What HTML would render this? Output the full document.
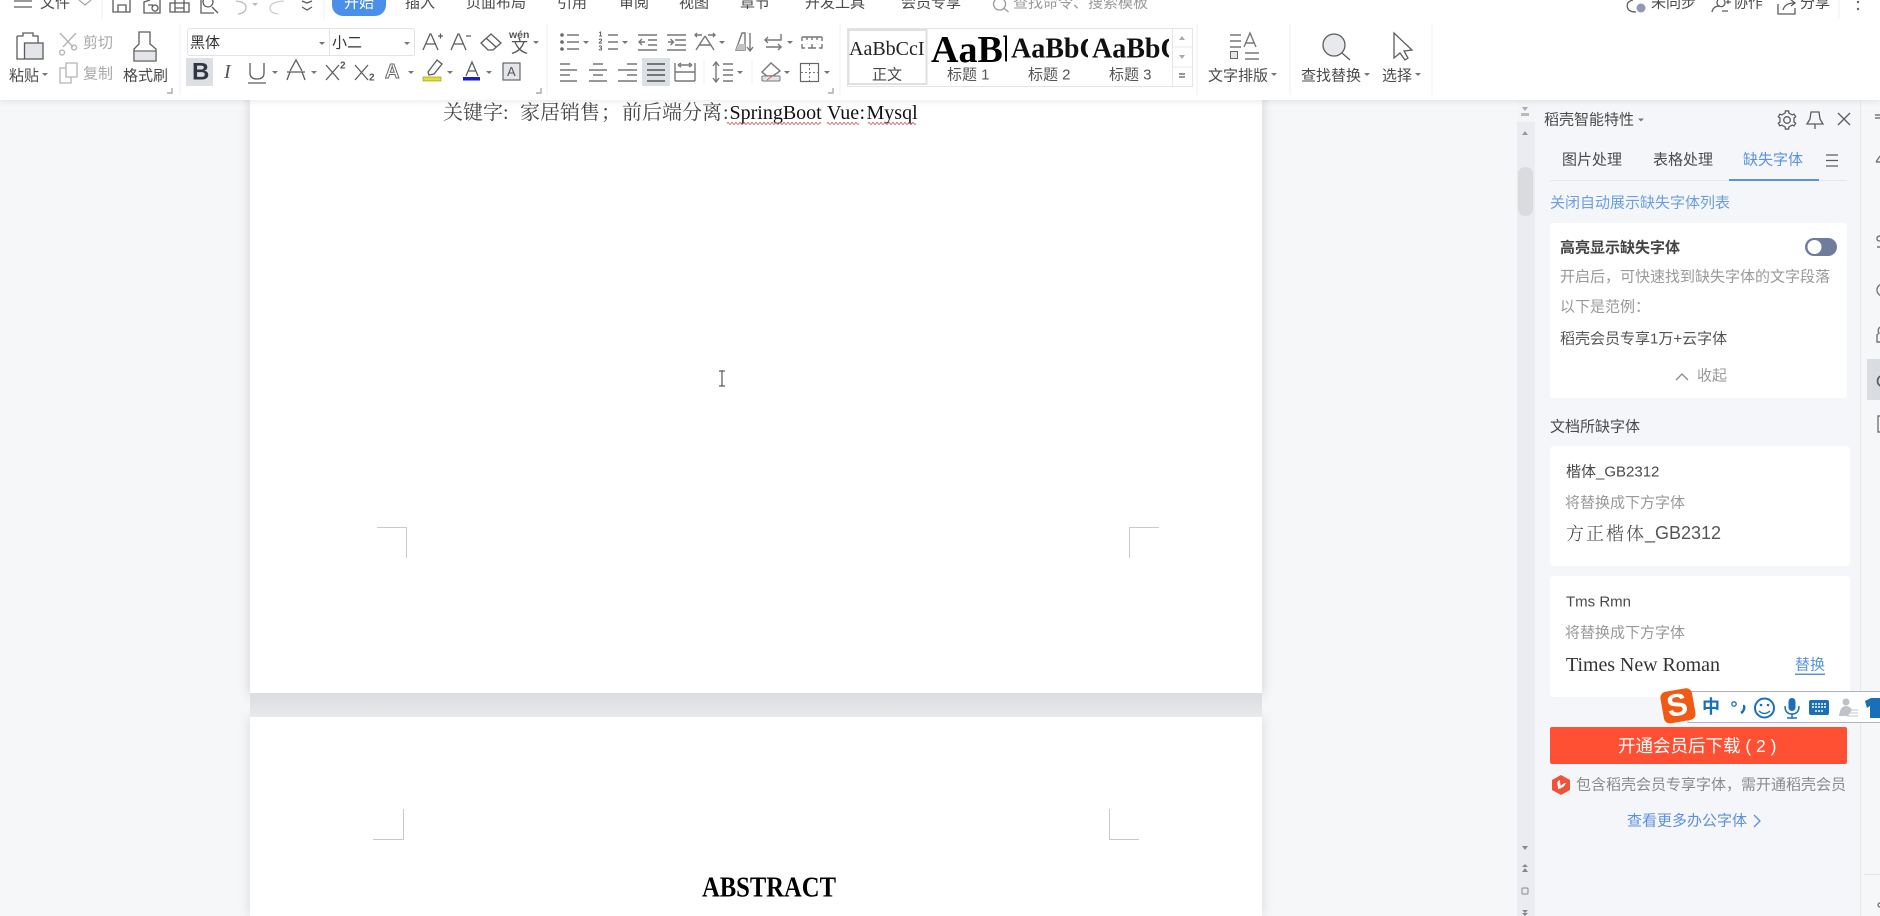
<!DOCTYPE html>
<html lang="zh"><head><meta charset="utf-8"><title>WPS</title>
<style>
html,body{margin:0;padding:0;width:1880px;height:916px;overflow:hidden;background:#f6f7f9}
div{position:absolute}
svg{position:absolute;left:0;top:0;display:block}
text{font-family:"Liberation Sans","Noto Sans CJK SC",sans-serif;font-size:15px;fill:#4a4a4a;dominant-baseline:central}
.g{fill:#a8a8a8}.m{fill:#999}.b{fill:#5a93dc}.d{fill:#555}
.s{font-family:"Liberation Serif","Noto Serif CJK SC",serif;fill:#222}
.k{font-family:"Liberation Serif","Noto Serif CJK SC",serif;font-size:20px;fill:#444}
.i{fill:none;stroke:#5c5c5c;stroke-width:1.3}
.l{fill:none;stroke:#777;stroke-width:1.4}
.c{fill:#777;stroke:none}
.h{fill:none;stroke:#c9c9c9;stroke-width:1}
.sep{stroke:#eeeff1;stroke-width:1}
</style></head><body>
<div style="left:250px;top:90px;width:1012px;height:603px;background:#fff;box-shadow:0 3px 12px rgba(0,0,0,.15)"></div>
<div style="left:250px;top:717px;width:1012px;height:199px;background:#fff;box-shadow:0 0 12px rgba(0,0,0,.13)"></div>
<div style="left:250px;top:693px;width:1012px;height:24px;background:linear-gradient(#dadcdf,#e8e9eb)"></div>
<div style="left:1517px;top:100px;width:18px;height:816px;background:#eaecf1"></div>
<div style="left:1517px;top:100px;width:18px;height:22px;background:#f4f5f8"></div>
<div style="left:1518px;top:167px;width:15px;height:49px;background:#d9dbdf;border-radius:7px"></div>
<div style="left:1535px;top:100px;width:325px;height:816px;background:#f4f6f9"></div>
<div style="left:1860px;top:100px;width:20px;height:816px;background:#f6f7f9;border-left:1px solid #e6e8ec;box-sizing:border-box"></div>
<div style="left:1867px;top:359px;width:13px;height:41px;background:#d9dce1"></div>
<div style="left:0;top:0;width:1880px;height:100px;background:#fff;box-shadow:0 2px 5px rgba(0,0,0,.08)"></div>
<div style="left:1550px;top:223px;width:297px;height:175px;background:#fff;border-radius:3px"></div>
<div style="left:1550px;top:446px;width:300px;height:120px;background:#fff;border-radius:4px"></div>
<div style="left:1550px;top:576px;width:300px;height:121px;background:#fff;border-radius:4px"></div>
<div style="left:1550px;top:727px;width:297px;height:37px;background:#ff5033;border-radius:2px"></div>

<svg width="1880" height="916" viewBox="0 0 1880 916" xmlns="http://www.w3.org/2000/svg">
<defs>
<clipPath id="c0"><rect x="849" y="30" width="77" height="40"/></clipPath>
<clipPath id="c1"><rect x="930" y="30" width="77" height="40"/></clipPath>
<clipPath id="c2"><rect x="1010" y="30" width="78" height="40"/></clipPath>
<clipPath id="c3"><rect x="1091" y="30" width="78" height="40"/></clipPath>
</defs>
<!-- top tabs -->
<path class="i" d="M14 1H32M14 7H32"/>
<text x="40" y="3">文件</text>
<path class="i" style="stroke:#aaa" d="M79 0L85 5L91 0"/>
<path class="sep" d="M102 0V19"/>
<path class="i" d="M113 0V12H130V0M118 12V5H126V12"/>
<path class="i" d="M150 0L144 2V13H160V0M148 5H153M152 8a3 3 0 1 1 0 .1"/>
<path class="i" d="M170 3H189V12H170ZM175 12V0M184 12V0M175 8H184"/>
<path class="i" d="M201 0V13H214M204 -1a5 5 0 1 0 8 0M212 7L218 13"/>
<path class="i" style="stroke:#bbb" d="M236 1Q246 2 246 7Q246 13 238 14"/>
<path class="c" d="M252 3H258L255 6Z" style="fill:#bbb"/>
<path class="i" style="stroke:#ccc" d="M284 1Q270 2 270 8Q270 13 278 14"/>
<path class="i" d="M302 1L307 3L312 1M302 7L307 10L312 7"/>
<path class="sep" d="M324 0V19"/>
<rect x="332" y="-10" width="54" height="26" rx="11" fill="#4a90e8"/>
<text x="344" y="3" style="fill:#fff">开始</text>
<text x="405" y="3">插入</text>
<text x="466" y="3">页面布局</text>
<text x="557" y="3">引用</text>
<text x="619" y="3">审阅</text>
<text x="679" y="3">视图</text>
<text x="740" y="3">章节</text>
<text x="805" y="3">开发工具</text>
<text x="901" y="3">会员专享</text>
<path class="i" style="stroke:#999" d="M1000 0a6 6 0 1 0 .1 0M1004 10L1009 14" transform="translate(-.5,-2)"/>
<text x="1013" y="3" class="m">查找命令、搜索模板</text>
<path class="i" d="M1633 0Q1625 2 1628 9Q1630 12 1636 12"/>
<circle cx="1641" cy="8" r="4.5" fill="#8f9bb0"/>
<text x="1651" y="3">未同步</text>
<path class="i" d="M1712 12Q1713 6 1720 6M1724 0a4 4 0 1 1 -6 0M1726 2H1731M1728 0V4M1722 11H1728"/>
<text x="1733" y="3">协作</text>
<path class="i" d="M1778 4V14H1795V8M1783 10Q1785 3 1794 3M1790 -1L1795 3L1791 6"/>
<text x="1800" y="3">分享</text>
<path class="sep" d="M1839 0V19"/>
<circle cx="1858" cy="2" r="1.2" fill="#666"/><circle cx="1858" cy="9" r="1.2" fill="#666"/>

<!-- clipboard -->
<path class="i" d="M17 36H23V33H33V36H38V43M17 36V59H24"/>
<rect x="24.500" y="43" width="18.500" height="16" fill="#e3e5ea" stroke="#5c5c5c" stroke-width="1.3"/>
<text x="9" y="76">粘贴</text><path class="c" d="M42 73H48L45 76Z"/>
<path class="i" style="stroke:#b4b4b4" d="M60 33L73 47M76 33L63 47M62 50a2.5 2.5 0 1 0 .1 0M74 45a2.5 2.5 0 1 0 .1 0"/>
<text x="83" y="43" class="g">剪切</text>
<path class="i" style="stroke:#b4b4b4" d="M66 63H77V77H66ZM66 68H60V83H71V77"/>
<text x="83" y="74" class="g">复制</text>
<path class="i" d="M139 32H150V44L156 49V61H134V49L139 44Z"/>
<rect x="134" y="51" width="22" height="10" fill="#e3e5ea" stroke="#5c5c5c" stroke-width="1.1"/>
<text x="123" y="76">格式刷</text>
<path class="l" style="stroke:#aaa" d="M167 93H172V88"/>
<path class="sep" d="M180 24V95"/>

<!-- font -->
<rect x="187.500" y="28.500" width="227" height="27" rx="2" fill="#fff" stroke="#e2e3e6"/>
<path d="M329.500 29V55" stroke="#e2e3e6"/>
<text x="190" y="43" style="fill:#333">黑体</text><path class="c" d="M319 42H325L322 45Z"/>
<text x="332" y="43" style="fill:#333">小二</text><path class="c" d="M404 42H410L407 45Z"/>
<path class="i" d="M423 50L430 34H431L438 50M426 44H435M438 36H443M440.500 33.500V38.500"/>
<path class="i" d="M451 50L458 34H459L466 50M454 44H463M466 36H471"/>
<path class="i" d="M481 43L491 34L501 43L493 50H488ZM486 38L496 47"/>
<text x="509" y="35" style="font-size:10.500px;font-weight:700;fill:#555">wén</text>
<text x="511" y="47" style="font-size:17px;fill:#555">文</text>
<path class="c" d="M533 41H539L536 44Z"/>
<path class="sep" d="M547 24V95"/>
<rect x="186" y="58" width="27" height="28" fill="#dcdfe3"/>
<text x="192" y="72" style="font-size:24px;font-weight:700;fill:#2f3742">B</text>
<text x="224" y="72" style="font-size:20px;font-style:italic;font-family:'Liberation Serif',serif;fill:#555">I</text>
<path class="i" d="M250 63V73Q250 79 257 79Q264 79 264 73V63M248 83H266"/>
<path class="c" d="M272 71H278L275 74Z"/>
<path class="i" d="M290 71L296 60L302 71M287 72H305M290 72L287 80M302 72L305 80"/>
<path class="c" d="M311 71H317L314 74Z"/>
<path class="i" d="M326 65L339 80M339 65L326 80M355 65L368 80M368 65L355 80"/>
<text x="340" y="66" style="font-size:10px;font-weight:700;fill:#555">2</text>
<text x="369" y="78" style="font-size:10px;font-weight:700;fill:#555">2</text>
<text x="385" y="72" style="font-size:20px;font-weight:700;fill:#fff;stroke:#666;stroke-width:1">A</text>
<path class="c" d="M408 71H414L411 74Z"/>
<path class="i" d="M428 72L437 60L442 64L434 74L429 75Z"/>
<rect x="423" y="77" width="18" height="4" fill="#e4de2e" stroke="#8f8c20" stroke-width=".6"/>
<path class="c" d="M447 71H453L450 74Z"/>
<path class="i" d="M466 76L472 62L478 76M468 71H476"/>
<rect x="463" y="77" width="17" height="3.500" fill="#1b1bc8"/>
<path class="c" d="M486 71H492L489 74Z"/>
<rect x="503" y="63" width="17" height="17" fill="#e3e5ea" stroke="#666" stroke-width="1.2"/>
<text x="507" y="71.500" style="font-size:13px;fill:#555">A</text>
<path class="l" style="stroke:#aaa" d="M536 93H541V88"/>

<!-- paragraph row 1 -->
<circle cx="562" cy="35" r="1.800" fill="#666"/><circle cx="562" cy="42" r="1.800" fill="#666"/><circle cx="562" cy="49" r="1.800" fill="#666"/>
<path class="l" d="M567 35H579M567 42H579M567 49H579"/><path class="c" d="M583 41H589L586 44Z"/>
<text x="598.500" y="35" style="font-size:7px;font-weight:700;fill:#555">1</text><text x="598.500" y="42" style="font-size:7px;font-weight:700;fill:#555">2</text><text x="598.500" y="49" style="font-size:7px;font-weight:700;fill:#555">3</text>
<path class="l" d="M608 35H618M608 42H618M608 49H618"/><path class="c" d="M622 41H628L625 44Z"/>
<path class="l" d="M638 35H657M648 40H657M648 45H657M638 50H657M645 42H639M642 39L639 42L642 45"/>
<path class="l" d="M667 35H686M675 40H686M675 45H686M667 50H686M668 42H673M670.500 39L673.500 42L670.500 45"/>
<path class="l" d="M695 35H702M697 33L695 35L697 37M708 35H715M713 33L715 35L713 37M705 36L696 50M705 36L714 50M699 45H711"/>
<path class="c" d="M719 41H725L722 44Z"/>
<path class="l" d="M736 50L742 33H745V50Z"/><path d="M738 44H745V50H736Z" fill="#bfc2c7"/>
<path class="l" d="M750 33V50M747 47L750 51L753 47"/>
<path class="l" d="M781 34V40H765M768 37L765 40L768 43M766 47H781M778 44L781 47L778 50"/>
<path class="c" d="M787 41H793L790 44Z"/>
<path class="l" d="M802 37H822M802 37V41M807 37V40M812 37V40M817 37V40M822 37V41M802 44V48H805M812 44V48M808 48H816M819 48H822V44"/>
<!-- paragraph row 2 -->
<path class="l" d="M560 64H570M560 70H577M560 75H570M560 81H577"/>
<path class="l" d="M593 64H603M589 70H607M593 75H603M589 81H607"/>
<path class="l" d="M627 64H637M618 70H637M627 75H637M618 81H637"/>
<rect x="642" y="58" width="28" height="28" fill="#dcdfe3"/>
<path d="M647 64H665M647 70H665M647 75H665M647 81H665" stroke="#555" stroke-width="1.500"/>
<path class="l" d="M675 63V81M695 63V81M675 72H695M675 81H695M680 65H690M678 65L681 63M678 65L681 67M692 65L689 63M692 65L689 67"/>
<path class="sep" d="M704 60V84"/>
<path class="l" d="M716 63V81M713 66L716 62L719 66M713 78L716 82L719 78M723 64H733M723 70H733M723 75H733M723 81H733"/>
<path class="c" d="M737 71H743L740 74Z"/>
<path class="sep" d="M752 60V84"/>
<path class="l" d="M762 72L771 63L780 71L773 76H767Z"/><rect x="762" y="76" width="18" height="5" rx="1" fill="#e3e5ea" stroke="#777"/>
<path d="M767 80L775 74" stroke="#d9635a"/>
<path class="c" d="M784 71H790L787 74Z"/>
<rect x="800.500" y="63.500" width="18" height="18" fill="none" stroke="#666" stroke-width="1.200"/>
<path d="M809.500 64V81M801 72.500H818" stroke="#777" stroke-dasharray="2 2"/>
<path class="c" d="M824 71H830L827 74Z"/>
<path class="l" style="stroke:#aaa" d="M828 93H833V88"/>
<path class="sep" d="M840 24V95"/>

<!-- styles -->
<rect x="847.500" y="28.500" width="345" height="58" fill="#fff" stroke="#e3e4e7"/>
<rect x="848.500" y="30" width="78" height="54" fill="#fff" stroke="#dfe0e3" stroke-width="2"/>
<g clip-path="url(#c0)"><text x="849" y="49" class="s" style="font-size:20px">AaBbCcI</text></g>
<g clip-path="url(#c1)"><text x="931" y="50" class="s" style="font-size:38px;font-weight:700;fill:#000">AaBb</text></g>
<g clip-path="url(#c2)"><text x="1011" y="49" class="s" style="font-size:28px;font-weight:700;fill:#111">AaBbC</text></g>
<g clip-path="url(#c3)"><text x="1092" y="49" class="s" style="font-size:28px;font-weight:700;fill:#111">AaBbC</text></g>
<text x="872" y="75">正文</text>
<text x="947" y="75" class="d">标题 1</text>
<text x="1028" y="75" class="d">标题 2</text>
<text x="1109" y="75" class="d">标题 3</text>
<path d="M1172.500 29V86M1173 47H1192M1173 67H1192" stroke="#e6e7ea"/>
<path class="c" d="M1179 40L1182 36L1185 40Z" style="fill:#aaa"/><path class="c" d="M1179 55L1182 59L1185 55Z" style="fill:#aaa"/>
<path class="l" d="M1179 74H1185M1179 77H1185"/>
<path class="sep" d="M1197 24V95"/>
<path class="l" d="M1230 35H1241M1230 41H1241M1230 47H1241M1244 47L1250 33L1256 47M1246 43H1254M1245 53H1259M1245 59H1259"/>
<rect x="1230.500" y="51.500" width="7" height="7" fill="#e3e5ea" stroke="#666"/>
<text x="1208" y="76">文字排版</text><path class="c" d="M1271 73H1277L1274 76Z"/>
<path class="sep" d="M1290 24V95"/>
<circle cx="1334" cy="45" r="11" fill="#e8e9ec" stroke="#5c5c5c" stroke-width="1.300"/><path class="i" d="M1342 53L1350 60"/>
<text x="1301" y="76">查找替换</text><path class="c" d="M1364 73H1370L1367 76Z"/>
<path class="i" d="M1394 33V58L1400 53L1405 60L1408 58L1404 51L1412 50Z"/>
<text x="1382" y="76">选择</text><path class="c" d="M1415 73H1421L1418 76Z"/>
<path class="sep" d="M1432 24V95"/>

<!-- doc -->
<text x="443" y="113" class="k">关键字</text><text x="503" y="113" class="k">:</text>
<text x="520" y="113" class="k">家居销售</text><text x="601" y="113" class="k">；</text>
<text x="622" y="113" class="k">前后端分离</text><text x="723" y="113" class="k">:</text>
<text x="729.500" y="113" class="k" style="fill:#111">SpringBoot</text>
<text x="827" y="113" class="k" style="fill:#111">Vue</text><text x="859.500" y="113" class="k" style="fill:#111">:</text>
<text x="866.500" y="113" class="k" style="fill:#111">Mysql</text>
<path d="M727 123.500q1-2 2 0t2 0t2 0t2 0t2 0t2 0t2 0t2 0t2 0t2 0t2 0t2 0t2 0t2 0t2 0t2 0t2 0t2 0t2 0t2 0t2 0t2 0t2 0t2 0t2 0t2 0t2 0t2 0t2 0t2 0t2 0t2 0t2 0t2 0t2 0t2 0t2 0t2 0t2 0t2 0t2 0t2 0t2 0t2 0t2 0t2 0t2 0M827 123.500q1-2 2 0t2 0t2 0t2 0t2 0t2 0t2 0t2 0t2 0t2 0t2 0t2 0t2 0t2 0t2 0t2 0M868 123.500q1-2 2 0t2 0t2 0t2 0t2 0t2 0t2 0t2 0t2 0t2 0t2 0t2 0t2 0t2 0t2 0t2 0t2 0t2 0t2 0t2 0t2 0t2 0t2 0t2 0" fill="none" stroke="#c9454a" stroke-width=".8"/>
<path d="M719 371H725M719 386H725M722 371V386" stroke="#333" stroke-width="1" fill="none"/>
<path class="h" d="M377 527.500H406.500V558M1159 527.500H1129.500V558M403.500 809V839.500H373M1109.500 809V839.500H1139"/>
<text x="702" y="887.500" style="font-family:'Liberation Serif',serif;font-size:29px;font-weight:700;fill:#000" textLength="134" lengthAdjust="spacingAndGlyphs">ABSTRACT</text>

<!-- scrollbar icons -->
<path class="c" d="M1522 107H1528L1525 111Z" style="fill:#aaa"/><path class="c" d="M1521 113H1529V116H1521Z" style="fill:#bbb"/>
<path class="c" d="M1522 135L1525 131L1528 135Z" style="fill:#999"/>
<path class="c" d="M1522 846H1528L1525 850Z" style="fill:#888"/>
<path class="c" d="M1522 867L1525 864L1528 867ZM1522 872L1525 868H1525L1528 872Z" style="fill:#888"/>
<rect x="1522" y="888" width="6" height="6" rx="1" fill="none" stroke="#888"/>
<path class="c" d="M1522 910H1528L1525 913ZM1522 913H1528L1525 916Z" style="fill:#888"/>

<!-- panel -->
<text x="1544" y="120">稻壳智能特性</text><path class="c" d="M1638 118.500H1644L1641 121.500Z"/>
<g transform="translate(1787 120)" class="i">
<path id="gt" d="M-3.500 -6.060L-1.770 -7.080L-1.600 -9.060L1.600 -9.060L1.770 -7.080L3.500 -6.060"/>
<path transform="rotate(60)" d="M-3.500 -6.060L-1.770 -7.080L-1.600 -9.060L1.600 -9.060L1.770 -7.080L3.500 -6.060"/>
<path transform="rotate(120)" d="M-3.500 -6.060L-1.770 -7.080L-1.600 -9.060L1.600 -9.060L1.770 -7.080L3.500 -6.060"/>
<path transform="rotate(180)" d="M-3.500 -6.060L-1.770 -7.080L-1.600 -9.060L1.600 -9.060L1.770 -7.080L3.500 -6.060"/>
<path transform="rotate(240)" d="M-3.500 -6.060L-1.770 -7.080L-1.600 -9.060L1.600 -9.060L1.770 -7.080L3.500 -6.060"/>
<path transform="rotate(300)" d="M-3.500 -6.060L-1.770 -7.080L-1.600 -9.060L1.600 -9.060L1.770 -7.080L3.500 -6.060"/>
<circle r="3.300"/>
</g>
<path class="i" d="M1811 112H1819L1820 119L1823 124H1807L1810 119ZM1815 124V129"/>
<path class="i" d="M1838 113L1850 125M1850 113L1838 125"/>
<text x="1562" y="160">图片处理</text>
<text x="1653" y="160">表格处理</text>
<text x="1743" y="160" class="b">缺失字体</text>
<path class="i" d="M1826 155H1838M1826 160.500H1838M1826 166H1838"/>
<path d="M1550 180.500H1847" stroke="#e5e7eb"/>
<rect x="1729" y="179" width="90" height="2" fill="#5a93dc"/>
<text x="1550" y="203" class="b" style="fill:#6a9fe2">关闭自动展示缺失字体列表</text>

<text x="1560" y="248" style="font-weight:700;fill:#444">高亮显示缺失字体</text>
<rect x="1805" y="238" width="32" height="18" rx="9" fill="#6f7c9b"/><circle cx="1814.500" cy="247" r="7" fill="#fff"/>
<text x="1560" y="277" class="m">开启后，可快速找到缺失字体的文字段落</text>
<text x="1560" y="307" class="m">以下是范例：</text>
<text x="1560" y="339" class="d">稻壳会员专享1万+云字体</text>
<path class="i" style="stroke:#888" d="M1676 380L1682 374L1688 380"/>
<text x="1697" y="376" class="m">收起</text>

<text x="1550" y="427">文档所缺字体</text>
<text x="1566" y="472">楷体_GB2312</text>
<text x="1565" y="503" class="m">将替换成下方字体</text>
<text x="1566" y="533" style="font-family:'Noto Serif CJK SC',serif;font-size:18px;font-weight:300;fill:#444;letter-spacing:2px">方正楷体</text>
<text x="1645" y="533" style="font-size:18px;fill:#555" textLength="76">_GB2312</text>
<text x="1566" y="602">Tms Rmn</text>
<text x="1565" y="633" class="m">将替换成下方字体</text>
<text x="1566" y="665" class="s" style="font-size:20px;fill:#333" textLength="154">Times New Roman</text>
<text x="1795" y="665" class="b" style="text-decoration:underline">替换</text>

<text x="1618" y="746" style="font-size:17.500px;fill:#fff">开通会员后下载 ( 2 )</text>
<path d="M1561 775L1570 780V790L1561 795L1552 790V780Z" fill="#f0523a"/>
<path d="M1558 787Q1556 781 1560 780Q1560 784 1561 786Q1563 783 1566 783Q1564 788 1558 789Z" fill="#fff"/>
<text x="1576" y="785" class="m" style="fill:#8a8a8a">包含稻壳会员专享字体，需开通稻壳会员</text>
<text x="1627" y="821" class="b" style="fill:#5b8fe0">查看更多办公字体</text>
<path class="i" style="stroke:#5b8fe0" d="M1754 815L1760 821L1754 827"/>

<!-- right rail stubs -->
<path class="l" d="M1875 115H1880M1875 118H1880"/>
<path class="l" d="M1876 162L1880 156M1876 162H1880"/>
<path class="l" d="M1880 236Q1877 236 1877 239Q1877 241 1880 241M1877 247H1880"/>
<circle cx="1883" cy="290" r="6" class="l"/>
<path class="l" d="M1880 327Q1877 330 1879 333L1877 335V342H1880"/>
<circle cx="1883" cy="381" r="5.500" fill="none" stroke="#555" stroke-width="1.600"/>
<path class="l" d="M1880 416H1878V432H1880"/>
<path d="M1864 874.500H1880" stroke="#e3e5e9"/>
<circle cx="1880" cy="905" r="2" class="l"/>

<!-- sogou bar -->
<rect x="1688" y="691.500" width="193" height="31" fill="#fff" stroke="#b0b3b8"/>
<g transform="rotate(-10 1677 706)"><rect x="1662" y="690" width="32" height="32" rx="6" fill="#f05a14"/>
<text x="1667" y="705" style="font-size:31px;font-weight:700;fill:#fff;font-family:'Liberation Sans',sans-serif">S</text></g>
<text x="1702" y="707" style="font-size:18px;font-weight:700;fill:#1a6fb8">中</text>
<circle cx="1734" cy="704" r="2.200" fill="none" stroke="#1a6fb8" stroke-width="1.300"/>
<path d="M1743 706q2 0 1 3t-3 4" fill="none" stroke="#1a6fb8" stroke-width="2.500"/>
<circle cx="1764.500" cy="708" r="9.500" fill="none" stroke="#1a6fb8" stroke-width="2"/>
<circle cx="1761" cy="705" r="1.300" fill="#1a6fb8"/><circle cx="1768" cy="705" r="1.300" fill="#1a6fb8"/>
<path d="M1759 711Q1764.500 716 1770 711" fill="none" stroke="#1a6fb8" stroke-width="1.500"/>
<rect x="1788.500" y="698" width="7" height="13" rx="3.500" fill="#1a6fb8"/>
<path d="M1785 706Q1785 714 1792 714Q1799 714 1799 706M1792 714V718M1787 718H1797" fill="none" stroke="#1a6fb8" stroke-width="1.500"/>
<rect x="1809" y="700" width="20" height="15" rx="2" fill="#1a6fb8"/>
<path d="M1812 704H1826M1812 707H1826M1815 711H1823" stroke="#fff" stroke-width="1.500" stroke-dasharray="2 1"/>
<circle cx="1846" cy="702" r="3.500" fill="#bfc3c9"/><path d="M1839 716Q1840 706 1846 706Q1850 706 1852 710L1848 716Z" fill="#bfc3c9"/>
<path d="M1847 710H1858M1847 713H1858M1847 716H1858" stroke="#c3c6cb"/>
<path d="M1865 701L1871 698H1880V718H1870V706L1867 708Z" fill="#1a6fb8"/>
</svg>
</body></html>
